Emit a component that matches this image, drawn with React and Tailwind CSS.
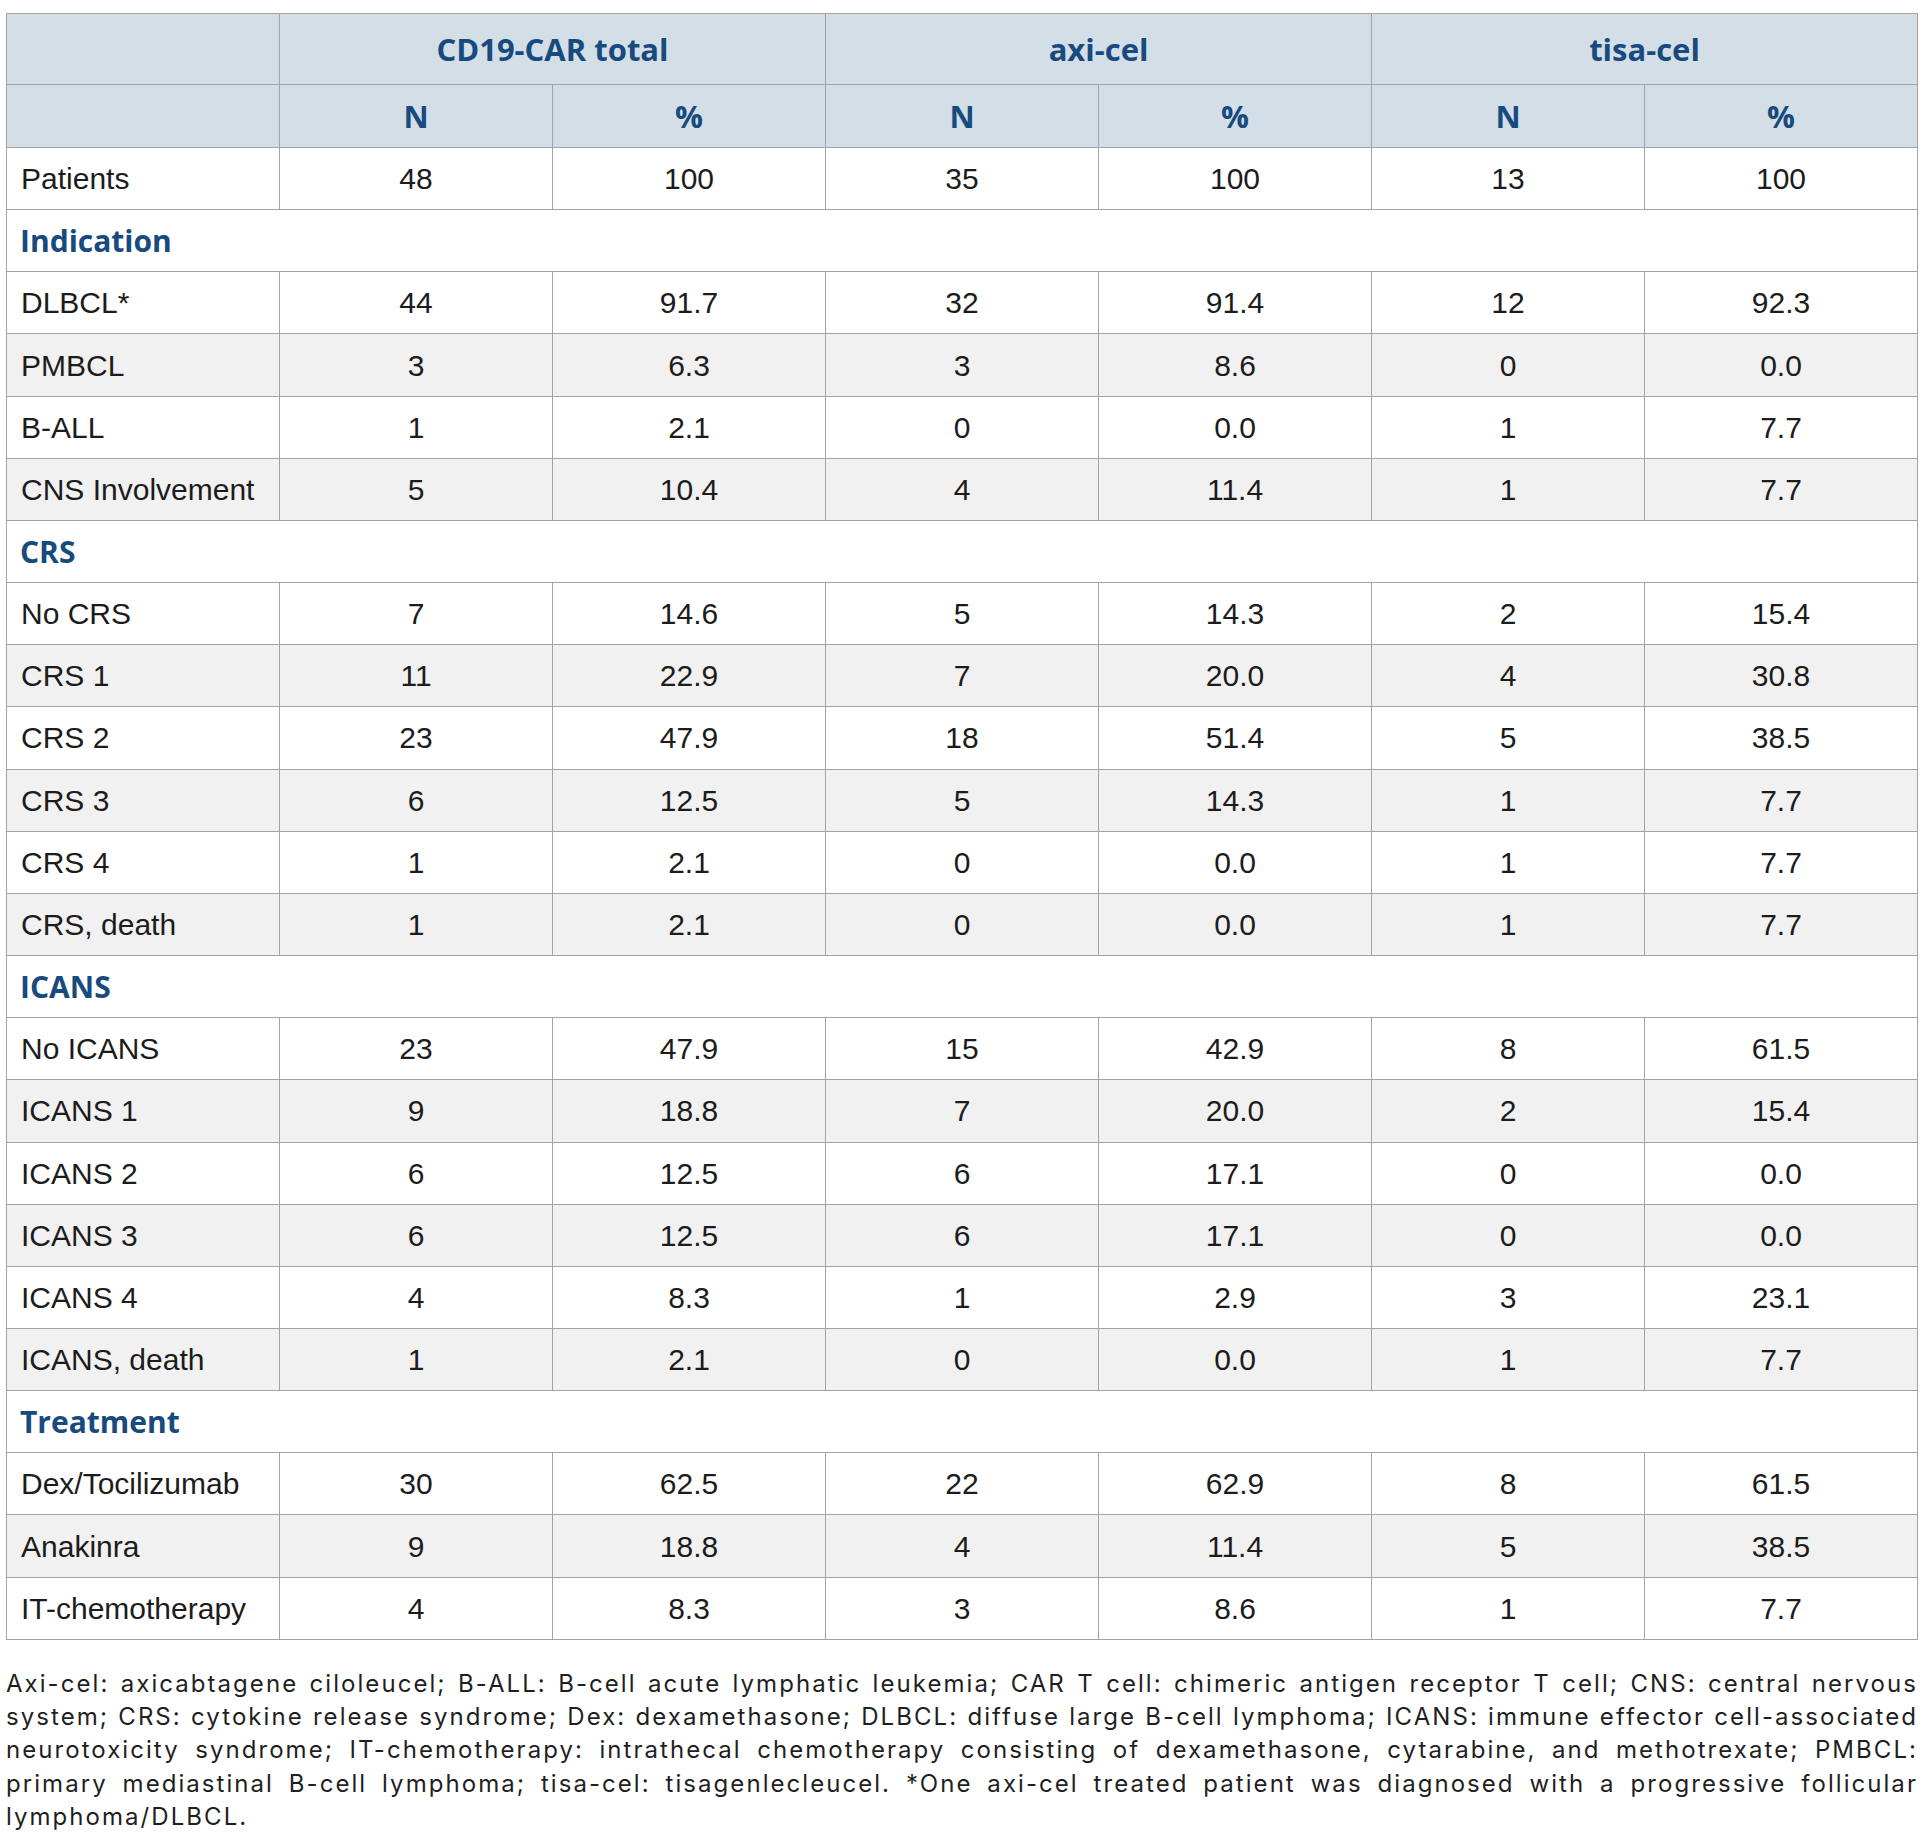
import React from "react";

const body = [
  { t: "row", c: ["Patients", "48", "100", "35", "100", "13", "100"], g: false },
  { t: "sec", c: "Indication" },
  { t: "row", c: ["DLBCL*", "44", "91.7", "32", "91.4", "12", "92.3"], g: false },
  { t: "row", c: ["PMBCL", "3", "6.3", "3", "8.6", "0", "0.0"], g: true },
  { t: "row", c: ["B-ALL", "1", "2.1", "0", "0.0", "1", "7.7"], g: false },
  { t: "row", c: ["CNS Involvement", "5", "10.4", "4", "11.4", "1", "7.7"], g: true },
  { t: "sec", c: "CRS" },
  { t: "row", c: ["No CRS", "7", "14.6", "5", "14.3", "2", "15.4"], g: false },
  { t: "row", c: ["CRS 1", "11", "22.9", "7", "20.0", "4", "30.8"], g: true },
  { t: "row", c: ["CRS 2", "23", "47.9", "18", "51.4", "5", "38.5"], g: false },
  { t: "row", c: ["CRS 3", "6", "12.5", "5", "14.3", "1", "7.7"], g: true },
  { t: "row", c: ["CRS 4", "1", "2.1", "0", "0.0", "1", "7.7"], g: false },
  { t: "row", c: ["CRS, death", "1", "2.1", "0", "0.0", "1", "7.7"], g: true },
  { t: "sec", c: "ICANS" },
  { t: "row", c: ["No ICANS", "23", "47.9", "15", "42.9", "8", "61.5"], g: false },
  { t: "row", c: ["ICANS 1", "9", "18.8", "7", "20.0", "2", "15.4"], g: true },
  { t: "row", c: ["ICANS 2", "6", "12.5", "6", "17.1", "0", "0.0"], g: false },
  { t: "row", c: ["ICANS 3", "6", "12.5", "6", "17.1", "0", "0.0"], g: true },
  { t: "row", c: ["ICANS 4", "4", "8.3", "1", "2.9", "3", "23.1"], g: false },
  { t: "row", c: ["ICANS, death", "1", "2.1", "0", "0.0", "1", "7.7"], g: true },
  { t: "sec", c: "Treatment" },
  { t: "row", c: ["Dex/Tocilizumab", "30", "62.5", "22", "62.9", "8", "61.5"], g: false },
  { t: "row", c: ["Anakinra", "9", "18.8", "4", "11.4", "5", "38.5"], g: true },
  { t: "row", c: ["IT-chemotherapy", "4", "8.3", "3", "8.6", "1", "7.7"], g: false },
];

const footLines = [
  "Axi-cel: axicabtagene ciloleucel; B-ALL: B-cell acute lymphatic leukemia; CAR T cell: chimeric antigen receptor T cell; CNS: central nervous",
  "system; CRS: cytokine release syndrome; Dex: dexamethasone; DLBCL: diffuse large B-cell lymphoma; ICANS: immune effector cell-associated",
  "neurotoxicity syndrome; IT-chemotherapy: intrathecal chemotherapy consisting of dexamethasone, cytarabine, and methotrexate; PMBCL:",
  "primary mediastinal B-cell lymphoma; tisa-cel: tisagenlecleucel. *One axi-cel treated patient was diagnosed with a progressive follicular",
];

const hd = "border border-[#a3a3a3] bg-[#d3dee7] text-[#174a7e] font-bold text-[31px] text-center align-middle [font-family:'Open_Sans',sans-serif]";
const td = "border border-[#a3a3a3] align-middle text-[30px] text-[#1c1c1c] [font-family:'Liberation_Sans',Arial,sans-serif]";

export default function App() {
  return (
    <div className="min-h-[1840px] w-[1928px] bg-white pl-[6px] pr-[10px] pt-[13px]">
      <table className="w-[1912px] table-fixed border-collapse">
        <colgroup>
          {[0, 1, 2, 3, 4, 5, 6].map((i) => (
            <col key={i} className="w-[273px]" />
          ))}
        </colgroup>
        <thead>
          <tr className="h-[71px]">
            <th className={hd}></th>
            <th className={hd} colSpan={2}>CD19-CAR total</th>
            <th className={hd} colSpan={2}>axi-cel</th>
            <th className={hd} colSpan={2}>tisa-cel</th>
          </tr>
          <tr className="h-[63px]">
            <th className={hd}></th>
            <th className={hd}>N</th>
            <th className={hd}>%</th>
            <th className={hd}>N</th>
            <th className={hd}>%</th>
            <th className={hd}>N</th>
            <th className={hd}>%</th>
          </tr>
        </thead>
        <tbody>
          {body.map((r, i) =>
            r.t === "sec" ? (
              <tr key={i} className="h-[62.17px] bg-white">
                <td
                  colSpan={7}
                  className="border border-[#a3a3a3] pl-[13px] align-middle text-[30px] font-bold text-[#174a7e] [font-family:'Open_Sans',sans-serif]"
                >
                  {r.c}
                </td>
              </tr>
            ) : (
              <tr key={i} className={r.g ? "h-[62.17px] bg-[#f1f1f1]" : "h-[62.17px] bg-white"}>
                {r.c.map((v, j) => (
                  <td key={j} className={j === 0 ? td + " pl-[14px] text-left" : td + " text-center"}>
                    {v}
                  </td>
                ))}
              </tr>
            )
          )}
        </tbody>
      </table>
      <div className="mt-[27px] w-[1912px] text-[24px] leading-[33.3px] tracking-[2.05px] text-[#1f1f1f] [font-family:Inter,sans-serif]">
        {footLines.map((l, i) => (
          <div key={i} className="whitespace-nowrap text-justify [text-align-last:justify]">
            {l}
          </div>
        ))}
        <div className="whitespace-nowrap">lymphoma/DLBCL.</div>
      </div>
    </div>
  );
}
